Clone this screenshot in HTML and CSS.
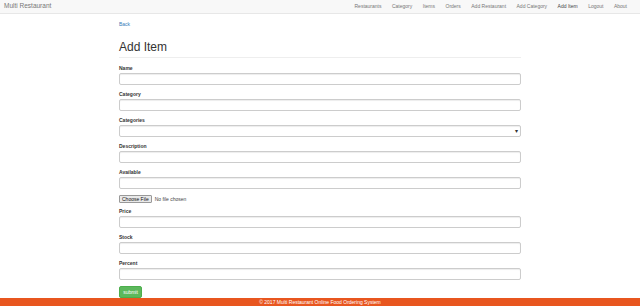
FILE: index.html
```html
<!DOCTYPE html>
<html>
<head>
<meta charset="utf-8">
<link rel="stylesheet" href="styles.css">
</head>
<body>
<nav class="navbar">
  <span class="brand">Multi Restaurant</span>
  <ul class="nav">
    <li>Restaurants</li>
    <li>Category</li>
    <li>Items</li>
    <li>Orders</li>
    <li>Add Restaurant</li>
    <li>Add Category</li>
    <li class="active">Add Item</li>
    <li>Logout</li>
    <li>About</li>
  </ul>
</nav>
<main class="container">
  <span class="back">Back</span>
  <h1 class="title">Add Item</h1>
  <form class="form">
    <div class="group"><label>Name</label><div class="input"></div></div>
    <div class="group"><label>Category</label><div class="input"></div></div>
    <div class="group"><label>Categories</label><div class="input select"><span class="arrow">▾</span></div></div>
    <div class="group"><label>Description</label><div class="input"></div></div>
    <div class="group"><label>Available</label><div class="input"></div></div>
    <div class="file"><span class="filebtn">Choose File</span><span class="nofile">No file chosen</span></div>
    <div class="group"><label>Price</label><div class="input"></div></div>
    <div class="group"><label>Stock</label><div class="input"></div></div>
    <div class="group"><label>Percent</label><div class="input"></div></div>
    <span class="submit">submit</span>
  </form>
</main>
<footer class="footer">© 2017 Multi Restaurant Online Food Ordering System</footer>
</body>
</html>
```
FILE: styles.css
```css
* { box-sizing: border-box; }
html, body { margin: 0; padding: 0; }
body {
  width: 640px;
  height: 306px;
  overflow: hidden;
  font-family: "Liberation Sans", Arial, sans-serif;
  color: #333;
  background: #fff;
}
.navbar {
  height: 14px;
  background: #f8f8f8;
  border-bottom: 1px solid #e7e7e7;
  display: flex;
  align-items: center;
  justify-content: space-between;
  padding: 0 4px 1px 4px;
}
.brand { font-size: 6.5px; line-height: 8px; color: #777; }
.nav {
  list-style: none;
  margin: 0;
  padding: 0 9px 0 0;
  display: flex;
  gap: 10.5px;
  font-size: 5px;
  line-height: 6px;
  color: #777;
}
.nav .active { color: #444; }
.container {
  width: 402px;
  margin: 0 auto;
  padding-top: 7px;
}
.back { display: block; font-size: 5px; color: #337ab7; height: 6px; line-height: 6px; }
.title {
  font-weight: normal;
  font-size: 12px;
  margin: 13px 0 0 0;
  line-height: 14px;
  height: 18px;
  padding-bottom: 3px;
  border-bottom: 1px solid #eee;
  color: #333;
}
.form { display: flex; flex-direction: column; margin-top: 7px; }
.group { display: flex; flex-direction: column; margin-bottom: 6px; flex-shrink: 0; }
label { display: block; font-size: 5px; font-weight: bold; line-height: 6px; height: 6px; margin-bottom: 2px; color: #333; }
.input {
  height: 12px;
  border: 1px solid #ccc;
  border-radius: 2px;
  box-shadow: inset 0 1px 1px rgba(0,0,0,.075);
  position: relative;
  flex-shrink: 0;
}
.select .arrow {
  position: absolute;
  right: 2px;
  top: 2px;
  font-size: 6px;
  line-height: 6px;
  color: #333;
}
.file { display: flex; align-items: center; gap: 3px; height: 8px; margin: 0 0 5px 0; font-size: 5px; flex-shrink: 0; }
.filebtn {
  border: 1px solid #999;
  background: #e9e9e9;
  padding: 1px 2px;
  font-size: 5px;
  line-height: 5px;
  height: 8px;
  color: #111;
  border-radius: 1px;
}
.nofile { color: #444; }
.submit {
  align-self: flex-start;
  background: #5cb85c;
  border: 1px solid #4cae4c;
  color: #fff;
  font-size: 5px;
  width: 23px;
  height: 12px;
  line-height: 10px;
  text-align: center;
  border-radius: 2px;
  flex-shrink: 0;
}
.footer {
  height: 8px;
  background: #e8561f;
  color: #fff;
  font-size: 5px;
  line-height: 8px;
  text-align: center;
}
```
